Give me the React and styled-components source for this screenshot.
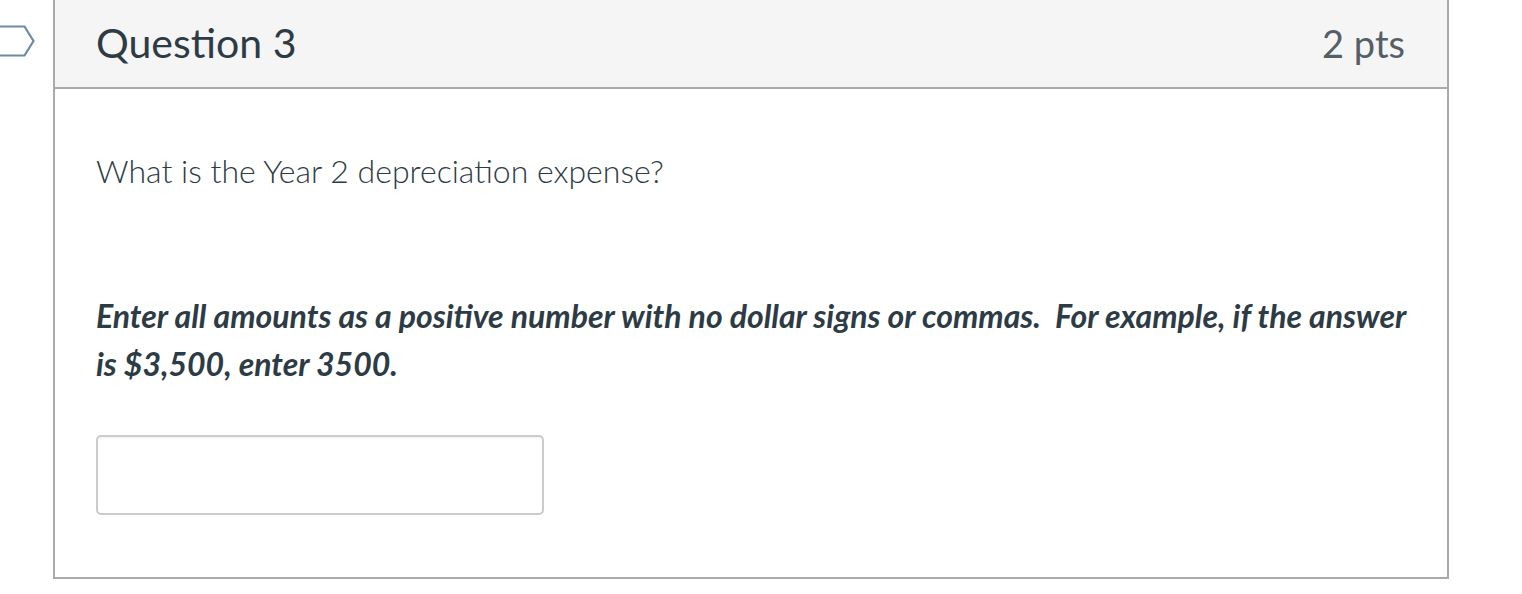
import styled, { createGlobalStyle } from "styled-components";

const Global = createGlobalStyle`
  html, body {
    margin: 0;
    padding: 0;
    background: #ffffff;
    font-family: Lato, "Helvetica Neue", Arial, sans-serif;
    color: #2d3b45;
  }
`;

const Page = styled.div`
  display: flex;
  align-items: flex-start;
  width: 1522px;
`;

const FlagCol = styled.div`
  width: 53px;
  flex: none;
  padding-top: 25px;
`;

const Card = styled.div`
  width: 1392px;
  margin-top: -2px;
  border: 2px solid #aaaaaa;
  background: #ffffff;
`;

const Header = styled.div`
  display: flex;
  align-items: center;
  justify-content: space-between;
  padding: 0 42px 0 41px;
  background: #f5f5f5;
  border-bottom: 2px solid #aaaaaa;
  box-sizing: border-box;
  height: 89px;
`;

const Title = styled.h2`
  margin: 0;
  font-size: 41px;
  font-weight: 400;
  color: #2d3b45;
  padding-bottom: 2px;
`;

const Points = styled.span`
  font-size: 38px;
  color: #555f66;
  padding-bottom: 2px;
`;

const Body = styled.div`
  padding: 58px 41px 62px 41px;
`;

const Text = styled.p`
  margin: 0 0 ${(p) => p.$gap}px;
  font-size: 32px;
  line-height: 48px;
  font-weight: ${(p) => (p.$strong ? 700 : 300)};
  font-style: ${(p) => (p.$strong ? "italic" : "normal")};
  color: #2d3b45;
`;

const Answer = styled.input`
  display: block;
  width: 448px;
  height: 80px;
  box-sizing: border-box;
  border: 2px solid #cbcbcb;
  border-radius: 5px;
  background: #ffffff;
  box-shadow: inset 0 1px 2px rgba(0, 0, 0, 0.06);
  font-family: inherit;
  font-size: 28px;
  padding: 0 14px;
  outline: none;
`;

function Flag() {
  return (
    <svg width="53" height="34" viewBox="0 0 53 34">
      <path
        d="M-4 1.5 H24.5 L33.5 16 L24.5 30.5 H-4"
        fill="none"
        stroke="#6c8aa6"
        strokeWidth="2.2"
        strokeLinejoin="miter"
      />
    </svg>
  );
}

export default function App() {
  return (
    <>
      <Global />
      <Page>
        <FlagCol>
          <Flag />
        </FlagCol>
        <Card>
          <Header>
            <Title>Question 3</Title>
            <Points>2 pts</Points>
          </Header>
          <Body>
            <Text $gap={97}>What is the Year 2 depreciation expense?</Text>
            <Text $strong $gap={47}>
              Enter all amounts as a positive number with no dollar signs or commas.&nbsp; For example, if the answer is $3,500, enter 3500.
            </Text>
            <Answer type="text" aria-label="Answer" />
          </Body>
        </Card>
      </Page>
    </>
  );
}
